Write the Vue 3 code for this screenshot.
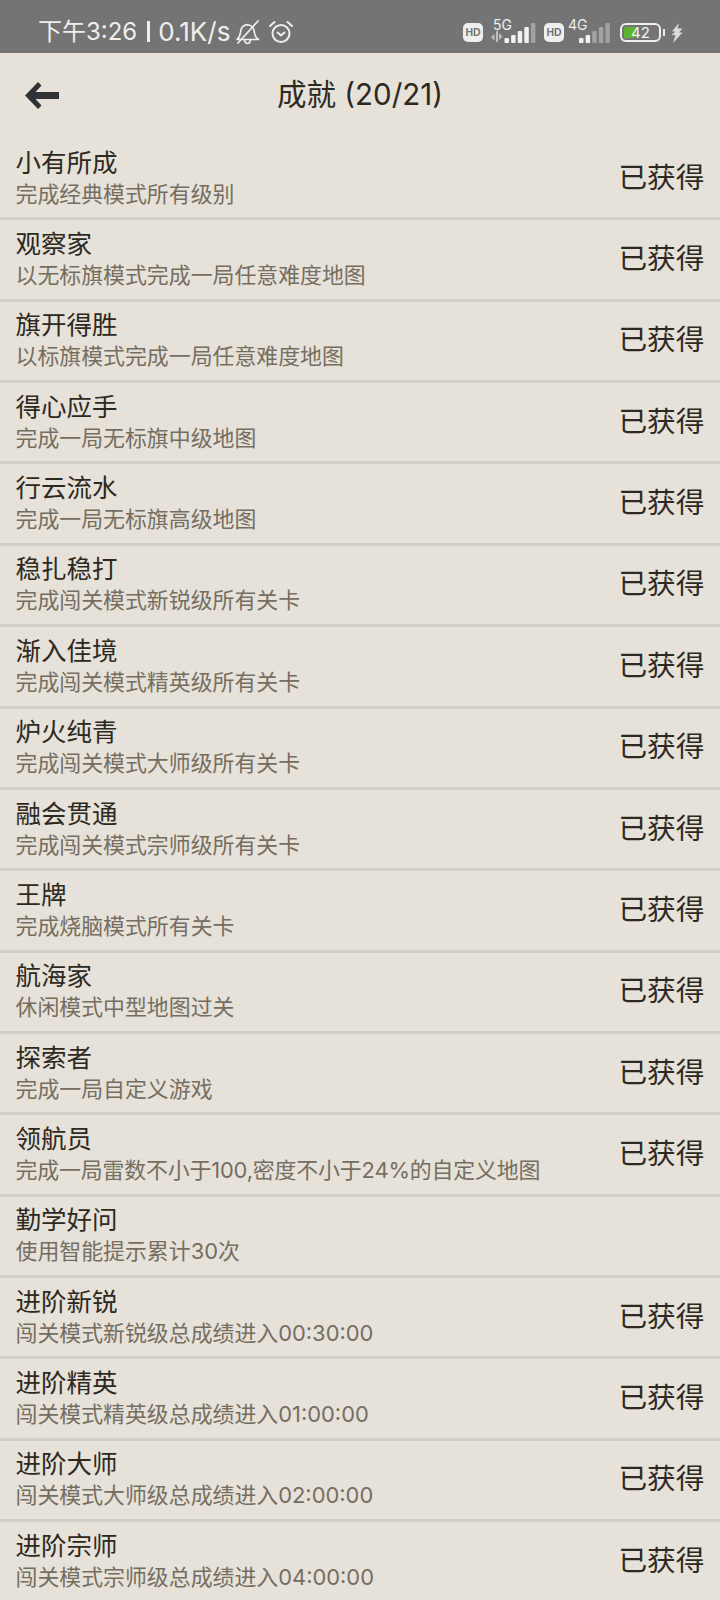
<script setup>
const rows = [
  ['小有所成', '完成经典模式所有级别', true],
  ['观察家', '以无标旗模式完成一局任意难度地图', true],
  ['旗开得胜', '以标旗模式完成一局任意难度地图', true],
  ['得心应手', '完成一局无标旗中级地图', true],
  ['行云流水', '完成一局无标旗高级地图', true],
  ['稳扎稳打', '完成闯关模式新锐级所有关卡', true],
  ['渐入佳境', '完成闯关模式精英级所有关卡', true],
  ['炉火纯青', '完成闯关模式大师级所有关卡', true],
  ['融会贯通', '完成闯关模式宗师级所有关卡', true],
  ['王牌', '完成烧脑模式所有关卡', true],
  ['航海家', '休闲模式中型地图过关', true],
  ['探索者', '完成一局自定义游戏', true],
  ['领航员', '完成一局雷数不小于100,密度不小于24%的自定义地图', true, true],
  ['勤学好问', '使用智能提示累计30次', false],
  ['进阶新锐', '闯关模式新锐级总成绩进入00:30:00', true],
  ['进阶精英', '闯关模式精英级总成绩进入01:00:00', true],
  ['进阶大师', '闯关模式大师级总成绩进入02:00:00', true],
  ['进阶宗师', '闯关模式宗师级总成绩进入04:00:00', true],
]
const sig1 = [5, 8, 12, 16, 20]
const sig2 = [5, 8, 12, 16, 20]
</script>

<template>
  <div class="page">
    <div class="status">
      <div class="left">
        <span class="time">下午3:26</span>
        <span class="sep"></span>
        <span class="speed">0.1K/s</span>
        <svg class="bell" width="26" height="26" viewBox="0 0 26 26" fill="none" stroke="#efefef" stroke-width="1.7" stroke-linejoin="round" stroke-linecap="round">
          <path d="M2 20.500c2.200-1.600 3-3.500 3.300-6.500.4-4.200 2-7.500 6.500-8.300 4.300.3 7.200 3.300 7.500 7.300.2 3.200 1.800 5.800 4.200 7.500z" />
          <path d="M9.500 21c.3 2.200 1.500 3.500 3 3.500s2.700-1.300 3-3.500" />
          <path d="M3 24L23 2" />
        </svg>
        <svg class="alarm" width="26" height="26" viewBox="0 0 26 26" fill="none" stroke="#efefef" stroke-width="2" stroke-linecap="round" stroke-linejoin="round">
          <circle cx="13" cy="14.500" r="8.500" />
          <path d="M2 7L6.500 3M24 7L19.500 3" />
          <path d="M9.500 13.500L13 16.500L16.500 13.500" />
        </svg>
      </div>
      <div class="right">
        <span class="hd">HD</span>
        <div class="net">
          <span class="gen">5G</span>
          <svg width="45" height="21" viewBox="0 0 45 21" class="sig">
            <path d="M0 15l3.500-3v7zM5 9h2v11H5zM8 11l3.500 3.500L8 18z" fill="#bdbdbd" />
            <rect v-for="(h, i) in sig1" :key="i" :x="13.500 + i * 6.600" :y="21 - h" width="4.500" :height="h" rx="1" :fill="i === 4 ? '#a2a2a2' : '#f2f2f2'" />
          </svg>
        </div>
        <span class="hd">HD</span>
        <div class="net net2">
          <span class="gen">4G</span>
          <svg width="34" height="21" viewBox="0 0 34 21" class="sig">
            <rect v-for="(h, i) in sig2" :key="i" :x="1 + i * 6.600" :y="21 - h" width="4.500" :height="h" rx="1" :fill="i < 2 ? '#f2f2f2' : '#a2a2a2'" />
          </svg>
        </div>
        <div class="battery">
          <span class="fill"></span>
          <span class="num">42</span>
        </div>
        <span class="tip"></span>
        <svg class="bolt" width="12" height="20" viewBox="0 0 12 20">
          <path d="M8 0L1 8.500h3.500L0.500 12h4L2 20l9.500-10.500H8L11.500 5.500H6.500z" fill="#dcdcdc" />
        </svg>
      </div>
    </div>

    <header class="bar">
      <svg class="back" width="34" height="27" viewBox="0 0 34 27">
        <path d="M13 0L0 13.500 13 27l3.500-3.500L10.500 17H34v-7H10.500l6-6.500z" fill="#2f3335" />
      </svg>
      <h1 class="title">成就 (20/21)</h1>
    </header>

    <ul class="list">
      <li v-for="r in rows" :key="r[0]" class="row">
        <div class="info">
          <div class="name">{{ r[0] }}</div>
          <div class="desc" :class="{ tight: r[3] }">{{ r[1] }}</div>
        </div>
        <div v-if="r[2]" class="got">已获得</div>
      </li>
    </ul>
  </div>
</template>

<style>
html, body { margin: 0; background: #e6e2da; }
</style>

<style scoped>
.page {
  width: 720px;
  height: 1600px;
  overflow: hidden;
  background: #e6e2da;
  font-family: Inter, "Noto Sans CJK SC", sans-serif;
}
.status {
  height: 53px;
  background: #747474;
  display: flex;
  align-items: center;
  justify-content: space-between;
  padding: 0 37px 0 38px;
  color: #efefef;
  box-sizing: border-box;
}
.left { display: flex; align-items: center; padding-top: 10px; }
.time {
  font-size: 24px;
  line-height: 30px;
}
.speed {
  font-size: 26px;
  line-height: 30px;
}
.sep {
  width: 3px;
  height: 21px;
  background: #efefef;
  margin: 0 8px 0 10px;
}
.bell { margin-left: 5px; }
.alarm { margin-left: 7px; }
.right { display: flex; align-items: center; padding-top: 12px; }
.hd {
  width: 20px;
  height: 19px;
  flex: none;
  border-radius: 5px;
  background: #efefef;
  color: #747474;
  font: 700 10.500px/19px "Liberation Sans", sans-serif;
  text-align: center;
}
.net { position: relative; width: 45px; height: 24px; margin: 0 8px; }
.net2 { width: 32px; margin: 0 10px 0 14px; }
.gen {
  position: absolute;
  left: 2px;
  top: -4px;
  font: 14px/16px Inter, sans-serif;
  color: #efefef;
}
.net2 .gen { left: -10px; }
.sig { position: absolute; left: 0; bottom: 1.500px; }
.battery {
  position: relative;
  width: 37px;
  height: 15px;
  border: 2px solid #efefef;
  border-radius: 6px;
  overflow: hidden;
}
.fill {
  position: absolute;
  left: 2px;
  top: 2px;
  bottom: 2px;
  width: 12px;
  background: #5cb52c;
  border-radius: 2px;
}
.num {
  position: absolute;
  inset: 0;
  text-align: center;
  font: 15px/15px Inter, sans-serif;
  color: #f4f4f4;
}
.tip {
  width: 2px;
  height: 7px;
  background: #efefef;
  margin-left: 2px;
}
.bolt { margin-left: 6px; }
.bar {
  height: 86px;
  position: relative;
  display: flex;
  align-items: flex-start;
  justify-content: center;
  padding-top: 21px;
  box-sizing: border-box;
}
.back { position: absolute; left: 25px; top: 29px; }
.title {
  margin: 0;
  font-size: 29.500px;
  font-weight: 400;
  color: #2d2820;
  line-height: 40px;
}
.list { list-style: none; margin: 0; padding: 0; }
.row {
  height: 81.360px;
  box-sizing: border-box;
  border-bottom: 3px solid #d1cec7;
  display: flex;
  align-items: center;
  justify-content: space-between;
  padding: 0 15.500px 3px 15.500px;
}
.info { display: flex; flex-direction: column; }
.name {
  font-size: 25.500px;
  line-height: 36px;
  margin-bottom: -2px;
  color: #2d2820;
}
.desc {
  font-size: 21.900px;
  line-height: 30px;
  color: #756d5f;
}
.tight { letter-spacing: -0.150px; }
.got {
  font-size: 28.700px;
  line-height: 40px;
  padding-top: 2px;
  color: #2d2820;
}
</style>
